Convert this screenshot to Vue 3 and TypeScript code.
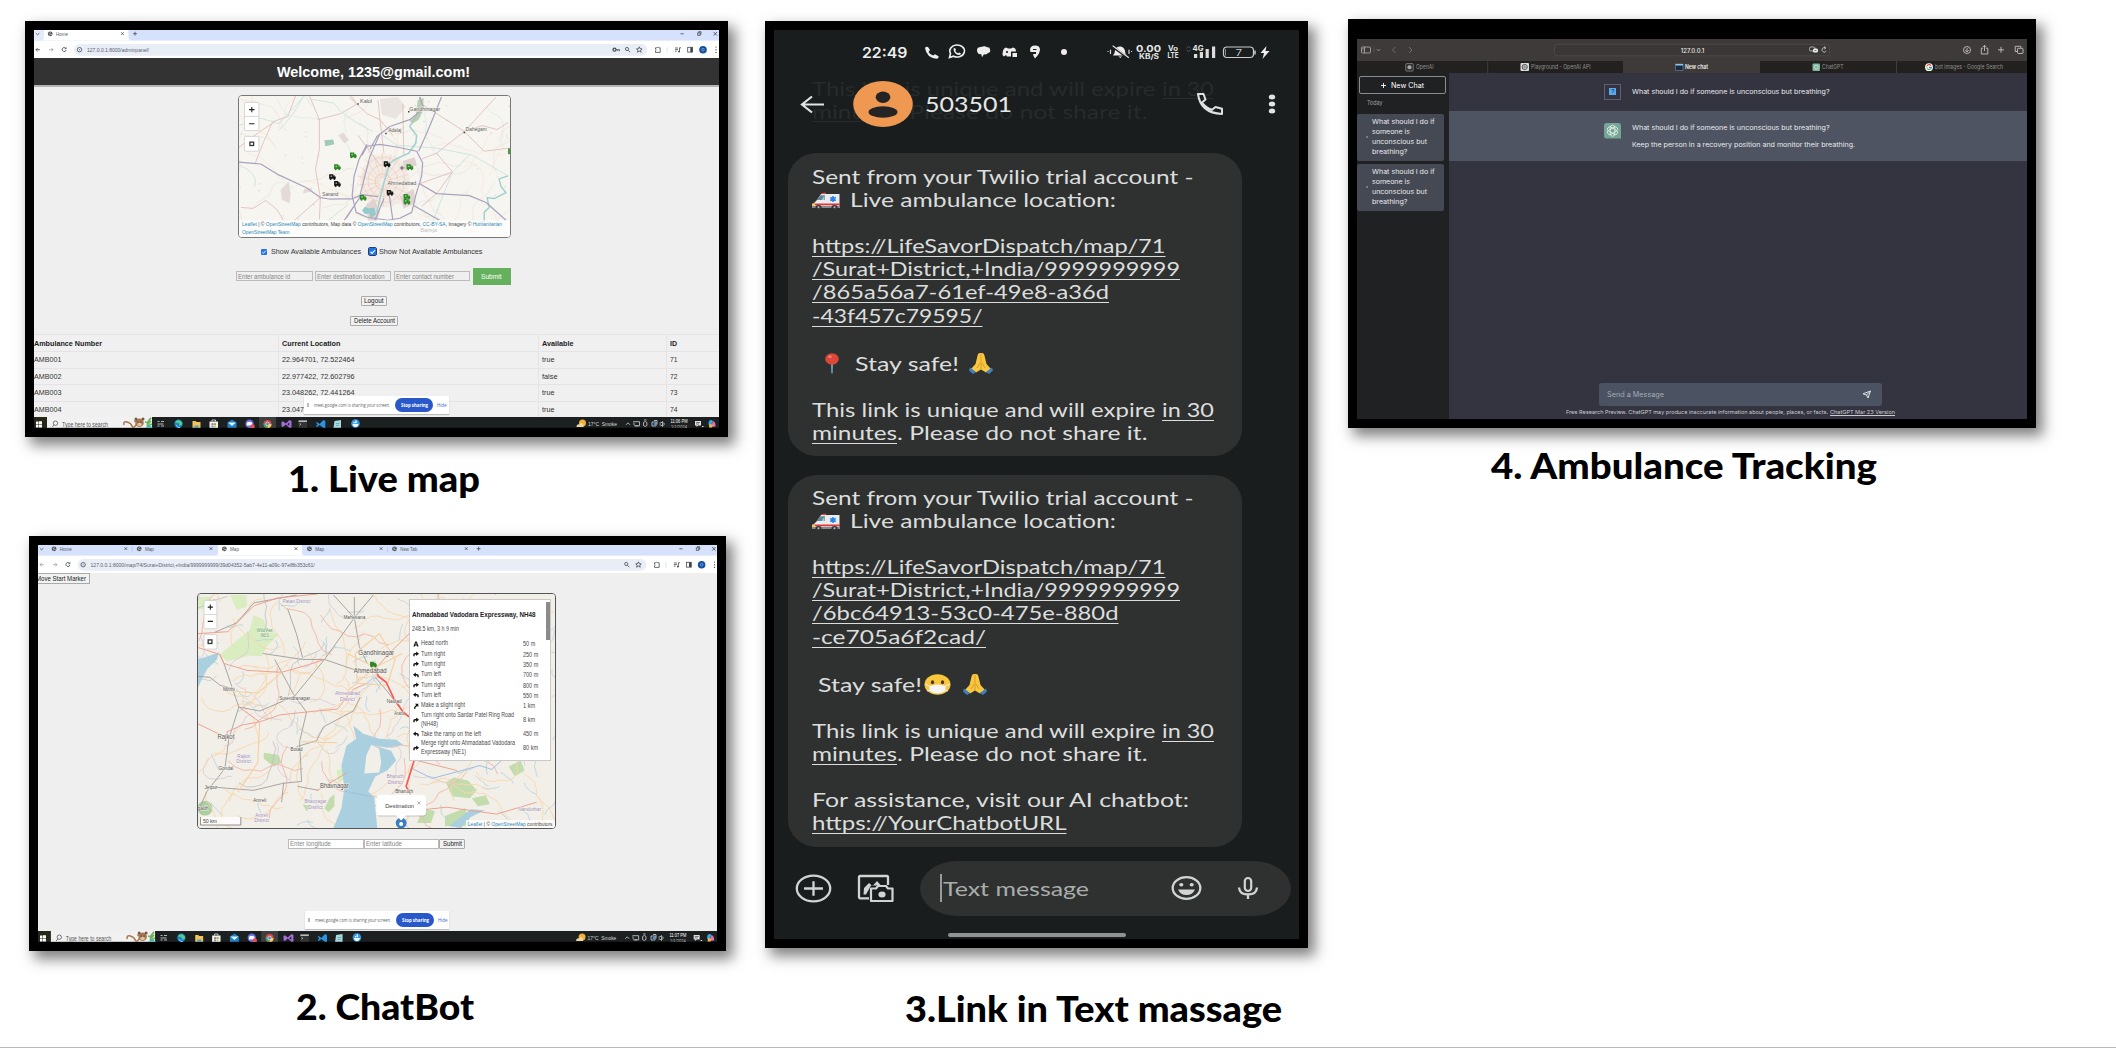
<script setup lang="ts">
interface Part { t?: string; w?: number; u?: boolean; ml?: number; emoji?: 'ambulance' | 'pin' | 'pray' | 'mask' }
interface Line { h: number; parts: Part[] }
interface Tab { x: number; name: string; w: number; active?: boolean }
interface Win { id: number; caption: string; capW: number; tabs: Tab[]; url: string; urlW: number; time: string }
interface Lbl { x: number; y: number; t: string; w: number; s?: number; c?: string }

/* Stretches a text element horizontally to the given width. */
const vFit = {
  mounted(el: HTMLElement, binding: { value: number }) {
    const w = el.getBoundingClientRect().width
    if (!w) return
    el.style.transform = `scaleX(${binding.value / w})`
    el.style.marginRight = `${binding.value - w}px`
  },
}

const windows: Win[] = [
  { id: 1, caption: '1. Live map', capW: 192, url: '127.0.0.1:8000/adminpanel/', urlW: 62, time: '11:06 PM', tabs: [{ x: 10, name: 'Home', w: 12, active: true }] },
  {
    id: 2, caption: '2. ChatBot', capW: 178, urlW: 226, time: '11:07 PM',
    url: '127.0.0.1:8000/map/74/Surat+District,+India/9999999999/39d04352-5ab7-4e11-a09c-97ef8b353c61/',
    tabs: [
      { x: 10, name: 'Home', w: 12 }, { x: 95.8, name: 'Map', w: 9 }, { x: 181.6, name: 'Map', w: 9, active: true },
      { x: 267.4, name: 'Map', w: 9 }, { x: 353.2, name: 'New Tab', w: 17 },
    ],
  },
]

const rows = [
  ['AMB001', '22.964701, 72.522464', 'true', '71'],
  ['AMB002', '22.977422, 72.602796', 'false', '72'],
  ['AMB003', '23.048262, 72.441264', 'true', '73'],
  ['AMB004', '23.047', 'true', '74'],
]

const steps = [
  { i: 'A', t: ['Head north'], w: [27], d: '50 m' },
  { i: 'R', t: ['Turn right'], w: [24], d: '250 m' },
  { i: 'R', t: ['Turn right'], w: [24], d: '350 m' },
  { i: 'L', t: ['Turn left'], w: [20], d: '700 m' },
  { i: 'R', t: ['Turn right'], w: [24], d: '800 m' },
  { i: 'L', t: ['Turn left'], w: [20], d: '550 m' },
  { i: 'S', t: ['Make a slight right'], w: [44], d: '1 km' },
  { i: 'R', t: ['Turn right onto Sardar Patel Ring Road', '(NH48)'], w: [93, 17], d: '8 km' },
  { i: 'L', t: ['Take the ramp on the left'], w: [60], d: '450 m' },
  { i: 'R', t: ['Merge right onto Ahmadabad Vadodara', 'Expressway (NE1)'], w: [94, 45], d: '80 km' },
]

const intro: Line[] = [
  { h: 23, parts: [{ t: 'Sent from your Twilio trial account -', w: 381.5 }] },
  { h: 23, parts: [{ emoji: 'ambulance' }, { t: 'Live ambulance location:', w: 266, ml: 9 }] },
  { h: 23, parts: [] },
  { h: 23, parts: [{ t: 'https://LifeSavorDispatch/map/71', w: 353.5, u: true }] },
  { h: 23, parts: [{ t: '/Surat+District,+India/9999999999', w: 368, u: true }] },
]
const expiry: Line[] = [
  { h: 23, parts: [] },
  { h: 23, parts: [{ t: 'This link is unique and will expire', w: 343.5 }, { t: 'in 30', w: 52, ml: 6.5, u: true }] },
  { h: 23, parts: [{ t: 'minutes', w: 85, u: true }, { t: '. Please do not share it.', w: 250.5 }] },
]
const bubbles: Line[][] = [
  [
    ...intro,
    { h: 23, parts: [{ t: '/865a56a7-61ef-49e8-a36d', w: 297, u: true }] },
    { h: 24, parts: [{ t: '-43f457c79595/', w: 170.5, u: true }] },
    { h: 23, parts: [] },
    { h: 25, parts: [{ emoji: 'pin', ml: 13 }, { t: 'Stay safe!', w: 104, ml: 16 }, { emoji: 'pray', ml: 10 }] },
    ...expiry,
  ],
  [
    ...intro,
    { h: 23, parts: [{ t: '/6bc64913-53c0-475e-880d', w: 306.5, u: true }] },
    { h: 24, parts: [{ t: '-ce705a6f2cad/', w: 174, u: true }] },
    { h: 23, parts: [] },
    { h: 25, parts: [{ t: 'Stay safe!', w: 104, ml: 6 }, { emoji: 'mask', ml: 2.5 }, { emoji: 'pray', ml: 12 }] },
    ...expiry,
    { h: 23, parts: [] },
    { h: 23, parts: [{ t: 'For assistance, visit our AI chatbot:', w: 377 }] },
    { h: 23, parts: [{ t: 'https://YourChatbotURL', w: 254.5, u: true }] },
  ],
]

/* Deterministic wandering lines that make up the minor roads and streams. */
function wander(seed: number, count: number, w: number, h: number, steps: number, len: number): string {
  let s = seed
  const r = () => { s = (s * 16807) % 2147483647; return s / 2147483647 }
  let d = ''
  for (let i = 0; i < count; i++) {
    let x = r() * w, y = r() * h, a = r() * 6.283
    d += `M${x.toFixed(1)} ${y.toFixed(1)}`
    for (let k = 0; k < steps; k++) {
      a += (r() - 0.5) * 1.3
      x += Math.cos(a) * len; y += Math.sin(a) * len
      d += `L${x.toFixed(1)} ${y.toFixed(1)}`
    }
  }
  return d
}
const m1 = {
  pink: wander(11, 16, 273, 143, 9, 7),
  orange: wander(77, 20, 273, 143, 8, 6),
  teal: wander(301, 14, 273, 143, 10, 5),
  dots: wander(902, 40, 273, 143, 1, 2),
}
let city = ''
for (let k = 0; k < 18; k++) {
  const a = (k / 18) * 6.283
  city += `M${145 + 4 * Math.cos(a)} ${87 + 4 * Math.sin(a)}L${145 + 26 * Math.cos(a + 0.15)} ${85 + 27 * Math.sin(a + 0.15)}`
}
const m2 = {
  orange: wander(21, 85, 359, 236, 9, 7),
  red: wander(222, 16, 359, 236, 9, 9),
  blue: wander(43, 95, 359, 236, 5, 3.5),
  purple: wander(99, 24, 359, 236, 12, 4),
  gray: wander(555, 7, 359, 236, 9, 8),
}

const labels1: Lbl[] = [
  { x: 128, y: 7, t: 'Kalol', w: 12 }, { x: 187, y: 15.5, t: 'Gandhinagar', w: 31 }, { x: 157, y: 37, t: 'Adalaj', w: 13 },
  { x: 239, y: 36, t: 'Dahegam', w: 21 }, { x: 164, y: 90, t: 'Ahmedabad', w: 29 }, { x: 92, y: 101, t: 'Sanand', w: 16 },
]
const P = '#a58fc0'
const labels2: Lbl[] = [
  { x: 99, y: 9, t: 'Patan District', w: 28, c: P }, { x: 157, y: 25, t: 'Mahesana', w: 22 },
  { x: 67, y: 38, t: 'Wild Ass', w: 16, c: '#4f9a4b' }, { x: 67, y: 43.5, t: 'WLS', w: 8, c: '#4f9a4b' },
  { x: 179, y: 61.5, t: 'Gandhinagar', w: 36, s: 6.4 }, { x: 173, y: 80, t: 'Ahmedabad', w: 33, s: 6.4 },
  { x: 31, y: 98, t: 'Morbi', w: 12 }, { x: 97, y: 107, t: 'Surendranagar', w: 31 },
  { x: 150, y: 102, t: 'Ahmedabad', w: 25, c: P }, { x: 150, y: 107.5, t: 'District', w: 15, c: P },
  { x: 28, y: 146.5, t: 'Rajkot', w: 17, s: 6.4 }, { x: 99, y: 158, t: 'Botad', w: 12 },
  { x: 46, y: 165, t: 'Rajkot', w: 13, c: P }, { x: 46, y: 170.5, t: 'District', w: 15, c: P },
  { x: 28, y: 178, t: 'Gondal', w: 15 }, { x: 137, y: 195.5, t: 'Bhavnagar', w: 29, s: 6.4 },
  { x: 13, y: 197, t: 'Jetpur', w: 13 }, { x: 62, y: 210, t: 'Amreli', w: 13 },
  { x: 118, y: 211, t: 'Bhavnagar', w: 22, c: P }, { x: 118, y: 216.5, t: 'District', w: 15, c: P },
  { x: 5, y: 218, t: 'gadh', w: 11 }, { x: 64, y: 224.5, t: 'Amreli', w: 13, c: P }, { x: 64, y: 230, t: 'District', w: 15, c: P },
  { x: 197, y: 110, t: 'Nadiad', w: 15 }, { x: 202, y: 122, t: 'Anand', w: 10 },
  { x: 198, y: 186, t: 'Bharuch', w: 17, c: P }, { x: 198, y: 191.500, t: 'District', w: 15, c: P },
  { x: 207, y: 201, t: 'Bharuch', w: 18 }, { x: 333, y: 219, t: 'Nandurbar', w: 23, c: P },
]
const trucks: [number, number, string][] = [
  [115, 60, '#2c8a22'], [99, 72, '#2c8a22'], [94, 82, '#151515'], [99, 89, '#151515'], [125, 103, '#2c8a22'],
  [149, 69, '#151515'], [172, 72, '#2c8a22'], [152, 98, '#151515'], [169, 102, '#2c8a22'], [169, 107, '#2c8a22'],
]
const history = ['What should I do if', 'someone is', 'unconscious but', 'breathing?']
const historyW = [62.5, 38, 55, 35.5]
</script>

<template>
  <main class="board">
    <div class="left">
      <div v-for="w in windows" :key="w.id" class="cell" :class="'cell' + w.id">
        <section class="frame desk">
          <!-- browser chrome -->
          <svg class="chrome" viewBox="0 0 685 28" preserveAspectRatio="none">
            <rect width="685" height="28" fill="#fff" />
            <rect width="685" height="10.6" fill="#d6e1fb" />
            <path v-if="w.id === 1" d="M0 0H10V7Q10 10.6 6 10.6H0Z" fill="#e4ebfb" />
            <path d="M1.8 3.2l1.8 1.6 1.8-1.6" class="ln" />
            <g v-for="(t, i) in w.tabs" :key="i" :transform="`translate(${t.x} 0)`">
              <path v-if="t.active" d="M0 0H84.5V6.6Q84.5 10.6 88 10.6H-3Q0 10.6 0 6.6Z" fill="#fff" />
              <path v-else-if="w.tabs[i + 1] && !w.tabs[i + 1].active" d="M85 1.500V6.500" stroke="#a9b6d6" stroke-width=".6" />
              <circle cx="6.200" cy="3.800" r="2.400" fill="#4a4f55" />
              <path d="M4.600 3l1.500.4.8-1.100M5.200 5.200l1.600-.9 1.100.3" stroke="#fff" stroke-width=".6" fill="none" />
              <text x="12" y="5.700" font-size="5.200" fill="#555b66" :textLength="t.w" lengthAdjust="spacingAndGlyphs">{{ t.name }}</text>
              <path d="M77.200 2.300l2.600 2.600m0-2.600l-2.600 2.600" class="ln" />
            </g>
            <path :transform="`translate(${w.tabs[w.tabs.length - 1].x + 91} 3.700)`" d="M-1.900 0H1.900M0-1.900V1.900" class="ln" />
            <path d="M646.500 3.800h3.200M663.700 2.800h2.400v2.600h-2.400zM664.600 2.500v-.8h2.400v2.600h-.7M679.600 2l3.400 3.600m0-3.600l-3.400 3.600" class="ln" />
            <rect x="40" y="14" width="573.500" height="11.800" rx="5.900" fill="#e9edf6" />
            <path d="M6 19.700H2m1.700-1.800L2 19.700l1.700 1.800" class="ln" :opacity="w.id === 1 ? 1 : .5" />
            <path d="M15 19.700h4m-1.700-1.800l1.700 1.800-1.700 1.800" class="ln" opacity=".5" />
            <path d="M31.700 18.300a2 2 0 1 0 .4 1.700M32.200 17.300v1.500h-1.500" class="ln" />
            <circle cx="45.500" cy="19.700" r="2.200" class="ln" /><circle cx="45.500" cy="19.700" r=".5" fill="#444" />
            <text x="53" y="21.800" font-size="6" fill="#596070" :textLength="w.urlW" lengthAdjust="spacingAndGlyphs">{{ w.url }}</text>
            <g v-if="w.id === 1" class="ln"><circle cx="580.500" cy="19.700" r="1.500" stroke-width="1.200" /><path d="M582 19.700h3.500v1.400M583.800 20v1" /></g>
            <circle cx="593" cy="19" r="1.600" class="ln" /><path d="M594.200 20.300l1.900 1.900" class="ln" />
            <path d="M605.300 16.800l.8 1.900 2 .2-1.500 1.300.5 2-1.800-1.100-1.800 1.100.5-2-1.500-1.300 2-.2z" class="ln" />
            <path d="M621.500 17.800h1.500a1 1 0 0 1 1.800 0h1.400v4.600h-4.700v-1.500a.9.9 0 0 0 0-1.700z" class="ln" />
            <path d="M633 17v5.500" stroke="#cbd7f0" stroke-width=".7" />
            <path d="M641 18h3m-3 1.600h3m-3 1.600h1.700M645.500 22v-4.200h1.700" class="ln" /><circle cx="645" cy="21.600" r=".9" fill="#444" />
            <rect x="653.700" y="17.300" width="4.800" height="4.800" class="ln" /><rect x="656.300" y="17.300" width="2.300" height="4.800" fill="#444" />
            <circle cx="669" cy="19.700" r="3.800" fill="#184f9c" /><circle cx="669" cy="19.700" r="1.300" fill="none" stroke="#8db4e4" stroke-width=".7" />
            <path d="M682 17v.1M682 19.700v.1M682 22.300v.1" stroke="#444" stroke-width="1.200" stroke-linecap="round" />
          </svg>

          <div v-if="w.id === 1" class="page">
            <h1 class="welcome"><span v-fit="193" class="f">Welcome, 1235@gmail.com!</span></h1>
            <div class="map map1">
              <svg viewBox="0 0 273 143" preserveAspectRatio="none">
                <rect width="273" height="143" fill="#f6f5f0" />
                <g fill="none" stroke-linejoin="round">
                  <path :d="m1.orange" stroke="#f6e3d3" stroke-width=".6" />
                  <path :d="m1.teal" stroke="#d6e7e3" stroke-width=".6" />
                  <path :d="m1.pink" stroke="#eeddda" stroke-width=".6" />
                  <path :d="m1.dots" stroke="#ded8d0" stroke-width=".9" />
                  <ellipse cx="147" cy="86" rx="25" ry="27" fill="#f0e1d8" opacity=".45" stroke="none" />
                  <path d="M128 110l8-6 6 14-4 10h-8zM165 66l12-4 2 8-12 6zM162 102l14-8 2 14-12 6z" fill="#dccacb" opacity=".8" stroke="none" />
                  <path d="M142 3l18-2 8 10-10 12-14-4z" fill="#e6e0db" opacity=".8" stroke="none" /><path d="M42 95l8-8 2 12-1 10-8-4zM100 40l5-3 6 8-5 3zM66 94l8-1-2 4-8 2z" fill="#ddd0cf" opacity=".7" stroke="none" />
                  <path :d="city" stroke="#f0cbb8" stroke-width=".6" />
                  <ellipse cx="145" cy="87" rx="8" ry="8" stroke="#ebc4b3" stroke-width=".7" />
                  <ellipse cx="145" cy="86" rx="15" ry="16" stroke="#eecbba" stroke-width=".7" />
                  <ellipse cx="146" cy="85" rx="21" ry="23" stroke="#eecbba" stroke-width=".6" />
                  <path d="M71 0L81 24V54L77 74 82 103 56 126M57 0L49 21 34 26 25 46 16 69M79 24L102 18 119 8M111 1L129 18 142 24 155 40M2 113L14 114 27 106 38 115 46 128M82 103L81 125M0 52Q20 36 35 27M119 8L113 0M140 4L142 24 146 58M165 8L166 60M120 40L142 70M227 36L184 8M227 36L259 1M227 36L247 56 271 53M227 36L199 58 184 64M227 36L245 30 260 34 271 27M199 58L215 77 200 98 184 112M182 89L215 77" stroke="#e2bfbc" stroke-width=".9" />
                  <path d="M0 70Q20 78 16 92M65 0Q55 20 40 35M142 38L159 50 200 53 235 60 271 81M71 3L95 7 104 17 120 28 135 36M0 30L20 22 40 28 65 1M90 126L110 110M232 60L215 77 190 140" stroke="#c6e1dc" stroke-width=".8" />
                  <path d="M271 81L262 84 264 92 269 98 257 104 250 103 252 113 247 118V127L240 130" stroke="#9bd0ce" stroke-width="1.400" />
                  <path d="M182 1L185 10 180 18 172 31 179 40 178 48 171 58 158 64 152 68 146 88 142 104 139 118" stroke="#a5d3d1" stroke-width="1.700" />
                  <path d="M124 116l3-4 4 2 5-1 2 7-5 4-2-5-4 1z" fill="#93cbcb" stroke="none" /><path d="M86 45l9-1 1 5-9 2z" fill="#a0c9b8" stroke="none" />
                  <path d="M180 4l6-2-1 14-4 8-6 4-3-3 6-5z" fill="#abc7a5" opacity=".8" stroke="none" />
                  <path d="M0 67L22 69 40 80 68 93 82 103 91 104.500 115 104 124 100 140 102M142 38L132 61 121 104 106 126M129 49L121 64 116 81 114 101 118 118 129 123 150 126 162 124 174 118 178 101 184 81 185 68 179 56 160 52 142 49 129 51 124 60M132 54L139 41 152 31 172 24 182 16 186 12 182 1M204 1L196 21 189 38 181 56M182 89L199 99 232 101 249 108 269 126M176 111L202 126M151 98L155 126M146 104L137 126M121 104L108 124" stroke="#aaa2bd" stroke-width="1.200" />
                </g>
                <text v-for="l in labels1" :key="l.t" :x="l.x" :y="l.y" :textLength="l.w" lengthAdjust="spacingAndGlyphs" text-anchor="middle" font-size="5.300" fill="#5e5e5e" class="halo">{{ l.t }}</text>
                <path d="M120 8v.1M171 16v.1M148 38v.1M227 37v.1" stroke="#444" stroke-width="1.500" stroke-linecap="square" />
                <g v-for="(t, i) in trucks" :key="i" :transform="`translate(${t[0]} ${t[1]})`" :fill="t[2]">
                  <path d="M-3.200-2.700H1V-1.400H2.300L3.500.2V2H-3.200Z" /><circle cx="-1.600" cy="2.200" r="1" /><circle cx="2" cy="2.200" r="1" />
                  <path d="M-1.900-.6h1.800M-1-1.500V.3M1.500-.6h.8" stroke="#dfe8dc" stroke-width=".5" />
                </g>
                <path d="M162 73h4.500M164.200 70.800v4.500" stroke="#555" stroke-width=".9" />
                <rect x="271" y="53" width="2" height="6" fill="#4c9a44" />
                <rect y="126" width="273" height="17" fill="#fff" opacity=".7" />
                <text x="191" y="138" font-size="5" fill="#c4c4c4" text-anchor="middle" textLength="17" lengthAdjust="spacingAndGlyphs">Bareja</text>
                <text x="3" y="132" font-size="5" fill="#444" textLength="262" lengthAdjust="spacingAndGlyphs"><tspan class="lk">Leaflet</tspan> | © <tspan class="lk">OpenStreetMap</tspan> contributors, Map data © <tspan class="lk">OpenStreetMap</tspan> contributors, <tspan class="lk">CC-BY-SA</tspan>, Imagery © <tspan class="lk">Humanitarian</tspan></text>
                <text x="3" y="139.500" font-size="5" class="lk" textLength="48" lengthAdjust="spacingAndGlyphs">OpenStreetMap Team</text>
                <g stroke="#c8c8c8" stroke-width=".7" fill="#fff"><rect x="5.500" y="6.500" width="14.500" height="28.500" rx="1" /><path d="M5.500 20.700H20" /><rect x="5.500" y="41" width="14.500" height="15" rx="1" /></g>
                <path d="M10.200 13.800h5.400M12.900 11.100v5.400M10.200 28.200h5.400" stroke="#222" stroke-width="1.100" /><rect x="11" y="46.800" width="3.700" height="3.400" fill="none" stroke="#333" stroke-width="1.300" />
              </svg>
            </div>
            <div class="checks">
              <i class="cb"><svg viewBox="0 0 6 6"><path d="M1.200 3l1.300 1.300 2.400-2.700" fill="none" stroke="#fff" stroke-width=".9" /></svg></i>
              <span v-fit="90" class="f">Show Available Ambulances</span>
              <i class="cb focus"><svg viewBox="0 0 6 6"><path d="M1.200 3l1.300 1.300 2.400-2.700" fill="none" stroke="#fff" stroke-width=".9" /></svg></i>
              <span v-fit="103.500" class="f">Show Not Available Ambulances</span>
            </div>
            <div class="form1">
              <div class="inp"><span v-fit="52" class="f">Enter ambulance id</span></div>
              <div class="inp"><span v-fit="67.500" class="f">Enter destination location</span></div>
              <div class="inp"><span v-fit="58" class="f">Enter contact number</span></div>
              <div class="green"><span v-fit="20.500" class="f">Submit</span></div>
            </div>
            <div class="btn logout"><span v-fit="19.500" class="f">Logout</span></div>
            <div class="btn del"><span v-fit="41" class="f">Delete Account</span></div>
            <div class="table">
              <div class="tr th"><span v-fit="68" class="f">Ambulance Number</span><span v-fit="58.500" class="f">Current Location</span><span v-fit="31.500" class="f">Available</span><span v-fit="7" class="f">ID</span></div>
              <div v-for="r in rows" :key="r[0]" class="tr"><div v-for="c in r" :key="c"><span v-fit="c.length > 10 ? 72.500 : c.length === 6 ? (c[0] === 'A' ? 27.500 : 22) : c.length === 5 ? 15.500 : c.length === 4 ? 12.500 : 7.500" class="f">{{ c }}</span></div></div>
            </div>
          </div>

          <div v-else class="page">
            <div class="btn move"><span v-fit="50" class="f">Move Start Marker</span></div>
            <div class="map map2">
              <svg viewBox="0 0 359 236" preserveAspectRatio="none">
                <rect width="359" height="236" fill="#f2efe8" />
                <path d="M22 61L52 36 56 21 66 26 70 36 81 41 69 53 64 63 52 62 29 68ZM32 1H49V13L39 16ZM0 3H14L10 14 0 16ZM139 178l6-2 1 12-5 2z" fill="#d9edc0" />
                <path d="M66 160l14 2 4 8-8 4-10-8zM132 206l5-4v12l-6 6-4-4zM249 190l8-5 14 3 9 10-7 8-18-2zM312 174l12-6 4 10-10 6zM226 216l12 3-4 12h-14zM248 224l20-8 6 18h-26zM275 206l14-3 4 9-12 2zM105 212l8 2-4 5z" fill="#c3dcae" />
                <circle cx="7" cy="216" r="7.500" fill="#a9cf9f" />
                <g fill="none" stroke-linejoin="round">
                  <path :d="m2.blue" stroke="#b3d2e0" stroke-width=".8" />
                  <path :d="m2.purple" stroke="#d3c4dc" stroke-width=".7" />
                  <path :d="m2.orange" stroke="#f8d7ac" stroke-width=".9" />
                  <path :d="m2.red" stroke="#f2b7a5" stroke-width=".9" />
                  <path :d="m2.gray" stroke="#c3bfbd" stroke-width=".8" />
                </g>
                <path d="M156 133L159 146 149 153 144 173 147 196 144 216 136 236H180L177 206 171 199 178 184 190 178 199 168 194 158 174 152 190 155 206 152 199 147 182 146 166 141ZM0 66L21 59 19 66 9 76 4 86 0 94ZM252 234l22-17 14 1-14 7-10 11z" fill="#aacfde" />
                <path d="M174 152L182 156 184 170 182 180 167 181 169 163Z" fill="#f2efe8" />
                <path d="M148 199L182 206" stroke="#87a8d8" stroke-width=".6" stroke-dasharray="2 1.500" />
                <g fill="none" stroke-linejoin="round">
                  <path d="M157 24V3M157 24L162 53 170 70M157 24L127 66 97 103M136 1L157 24 176 1M26 70L41 114 62 118 97 103M41 114L31 146 27 176 9 199 2 215M16 39L39 29 56 9 99 1M77 66L84 79 97 103 109 119 102 149 104 189M104 189L85 191 56 198 30 196 9 194M99 154L119 148 126 134 156 118 163 104M121 198L100 194M86 190L84 210M0 83L12 84 22 92 33 95M22 61L26 70M178 84L190 98 205 118M65 60L105 66 127 66 156 76 176 78M90 15Q100 40 105 64" stroke="#a7a3a0" stroke-width="1" />
                  <path d="M0 54L22 61 26 70 49 77 84 79 112 71 127 66M0 40L30 38 56 12 80 4 120 0M31 146L29 139 45 132 62 129 82 122 109 119 140 116 156 96 170 90M31 146L0 131M62 129L41 114M120 198L150 180M176 78L190 62 212 40M210 196L222 218 250 215 300 222 340 210M220 168L260 178" stroke="#eda190" stroke-width="1" />
                  <path d="M182 40L158 60 160 90 190 92 198 66ZM178 74L205 60M178 74L150 60M178 74L150 98M84 79L60 100 31 98M104 149L140 150M62 129L60 170 40 200" stroke="#f6cf9c" stroke-width="1.100" />
                  <path d="M215 176l20 10 30-8 18-5 12 4 16-15" stroke="#9dbbe0" stroke-width="1" />
                  <path d="M179 76L181 83 189 89 197 106 206 119 212 124M217 168L209 194 213 201" stroke="#fa5a55" stroke-width="1.700" />
                </g>
                <text v-for="(l, i) in labels2" :key="i" :x="l.x" :y="l.y" :textLength="l.w" lengthAdjust="spacingAndGlyphs" text-anchor="middle" :font-size="l.s || 5.300" :fill="l.c || '#555'" class="halo">{{ l.t }}</text>
                <g transform="translate(176 71)" fill="#2c8a22"><path d="M-3.200-2.700H1V-1.400H2.300L3.500.2V2H-3.200Z" /><circle cx="-1.600" cy="2.200" r="1" /><circle cx="2" cy="2.200" r="1" /></g>
                <rect x="269" y="228" width="90" height="8" fill="#fff" opacity=".75" />
                <text x="271" y="234" font-size="5.600" fill="#444" textLength="85" lengthAdjust="spacingAndGlyphs"><tspan class="lk">Leaflet</tspan> | © <tspan class="lk">OpenStreetMap</tspan> contributors</text>
                <path d="M198.500 231a5.500 5.500 0 0 1 11 0q0 3-3 5h-5q-3-2-3-5Z" fill="#397fc0" /><circle cx="204" cy="232" r="2" fill="#fff" />
                <rect x="179.500" y="203.500" width="49.500" height="21" rx="4" fill="#9a9a9a" opacity=".5" />
                <path d="M183 202.500H225Q229 202.500 229 206.500V219.500Q229 223.500 225 223.500H209L204 228.500 199 223.500H183Q179 223.500 179 219.500V206.500Q179 202.500 183 202.500Z" fill="#fff" />
                <text x="188" y="215.400" font-size="6" fill="#444" textLength="29" lengthAdjust="spacingAndGlyphs">Destination</text>
                <path d="M220.300 209.200l3.200 3.200m0-3.200l-3.200 3.200" stroke="#777" stroke-width=".6" />
                <rect x="2.500" y="225" width="40.500" height="8" fill="#fff" opacity=".75" /><path d="M2.500 225V233H43V225" fill="none" stroke="#777" stroke-width=".8" />
                <text x="5" y="231" font-size="5.300" fill="#444" textLength="14">50 km</text>
                <g stroke="#c8c8c8" stroke-width=".7" fill="#fff"><rect x="6" y="6.500" width="13" height="28.500" rx="1" /><path d="M6 20.700H19" /><rect x="6" y="41" width="13" height="14.500" rx="1" /></g>
                <path d="M9.800 13.200h5.200M12.400 10.600v5.200M9.800 27.600h5.200" stroke="#222" stroke-width="1.100" /><rect x="10.200" y="46.300" width="3.800" height="3.600" fill="none" stroke="#333" stroke-width="1.300" />
              </svg>
              <div class="dir">
                <h3><span v-fit="123.500" class="f">Ahmadabad Vadodara Expressway, NH48</span></h3>
                <p><span v-fit="47" class="f">248.5 km, 3 h 9 min</span></p>
                <div v-for="(s, i) in steps" :key="i" class="step" :class="{ two: s.t.length > 1 }">
                  <svg viewBox="0 0 6 6">
                    <path v-if="s.i === 'A'" d="M.4 5.600L2.300.4h1.400L5.600 5.600H4.200L3.900 4.500H2.100L1.800 5.600ZM2.400 3.500h1.200L3 1.500Z" />
                    <path v-else-if="s.i === 'S'" d="M2 .8h3.300v3.300L4.200 3 2.400 4.600V6H1.200V4L3.200 2Z" />
                    <path v-else :transform="s.i === 'L' ? 'translate(6 0) scale(-1 1)' : ''" d="M.3 5.300V3.500Q.3 2 2 2H3.200V.5L6 2.800 3.200 5V3.600H1.700V5.300Z" />
                  </svg>
                  <div class="what"><div v-for="(t, k) in s.t" :key="k"><span v-fit="s.w[k]" class="f">{{ t }}</span></div></div>
                  <span v-fit="s.d.length * 3.05" class="f dist">{{ s.d }}</span>
                </div>
                <i class="thumb"></i>
              </div>
            </div>
            <div class="form2">
              <div class="inp"><span v-fit="41" class="f">Enter longitude</span></div>
              <div class="inp"><span v-fit="36" class="f">Enter latitude</span></div>
              <div class="btn"><span v-fit="19" class="f">Submit</span></div>
            </div>
          </div>

          <div class="share">
            <i></i><span v-fit="76" class="f">meet.google.com is sharing your screen.</span>
            <b><span v-fit="27" class="f">Stop sharing</span></b>
            <u><span v-fit="9.500" class="f">Hide</span></u>
          </div>

          <!-- taskbar -->
          <svg class="task" viewBox="0 0 685 10.800" preserveAspectRatio="none">
            <rect width="685" height="10.800" fill="#1c2021" /><rect width="13" height="10.800" fill="#262719" />
            <path d="M2 4.500h2.500v2.800H2zM5 4.200h3v3.100H5zM2 7.800h2.500v2.600H2zM5 7.800h3v2.800H5z" fill="#fff" />
            <rect x="13" width="105" height="10.800" fill="#f1f1f1" />
            <circle cx="21.500" cy="6.200" r="2.200" fill="none" stroke="#444" stroke-width=".7" /><path d="M20 8l-1.800 2" stroke="#444" stroke-width=".7" />
            <text x="28" y="9.800" font-size="6.300" fill="#555" textLength="46" lengthAdjust="spacingAndGlyphs">Type here to search</text>
            <path d="M90 8q-1-4 3-3t5 4 4-1-2-4" fill="none" stroke="#a87650" stroke-width="1.500" /><circle cx="105.500" cy="5.700" r="4.300" fill="#a87854" /><circle cx="102" cy="2" r="1.500" fill="#795743" /><circle cx="109" cy="2" r="1.500" fill="#795743" /><ellipse cx="105.500" cy="7.500" rx="2.300" ry="1.800" fill="#e2c19e" /><path d="M104 5v.1M107 5v.1" stroke="#222" stroke-width="1" stroke-linecap="round" />
            <path d="M114 10.800q-2-5 3-10M111 5l4 1 2-2M113 9l5-2" stroke="#6eb35b" stroke-width="1.700" fill="none" /><path d="M111 10.800l4-3 4 3z" fill="#46b8b0" />
            <path d="M123.500 4.500h2M127 4.500h3M123.500 7h6M123.500 9h2m1.500 0h3" stroke="#bbb" stroke-width="1" />
            <circle cx="144.500" cy="6.800" r="4.200" fill="#1b83cf" /><path d="M141 5.500q3-4.500 7 0 1 3.500-3 3 1-2-1-2.500z" fill="#55cf83" /><path d="M142 8q1.500 3 4 2.800" stroke="#83d6f1" fill="none" />
            <path d="M158.500 4h3l1 1h4v5.800h-8z" fill="#f4c453" /><path d="M160.500 8.500h4v2.300h-4z" fill="#4b9ad8" />
            <path d="M175.500 4.500h8.500v6.300h-8.500z" fill="#eef2f4" /><path d="M178 4.500V3h3.500v1.500" fill="none" stroke="#eee" stroke-width=".8" /><path d="M177.500 6.200h2v1.800h-2z" fill="#e55f46" /><path d="M180 6.200h2v1.800h-2z" fill="#72b64a" /><path d="M177.500 8.500h2v1.800h-2z" fill="#3ba0e2" /><path d="M180 8.500h2v1.800h-2z" fill="#f3bd3b" />
            <path d="M193.500 5.500l4.500-3 4.500 3v5.300h-9z" fill="#1c83cc" /><path d="M194 5.500h8l-4 3.500z" fill="#e5f4fc" />
            <circle cx="215.500" cy="6.700" r="4.200" fill="#696ee0" /><path d="M213 5.500q2.500-1.500 5 0l.5 3h-6z" fill="#fff" /><circle cx="218.500" cy="9.500" r="2.300" fill="#e14f5e" />
            <rect x="225" width="17" height="10.800" fill="#3b3f40" />
            <circle cx="233.500" cy="7" r="4" fill="#e2493b" /><path d="M233.500 7L237.500 7A4 4 0 0 1 233.500 11z" fill="#f7cb45" /><path d="M229.700 6L233.500 7v4a4 4 0 0 1-3.800-5z" fill="#41a85c" /><circle cx="233.500" cy="7" r="1.800" fill="#4387ea" stroke="#fff" stroke-width=".6" />
            <path d="M247.500 5l1.300-.7 3 2.300L255.500 3l2 1v6.500l-2 .3-3.700-3.200-3 2.400-1.300-.8z" fill="#a66fd9" /><path d="M255.300 5.500v3.300l-2-1.600z" fill="#1c2021" />
            <path d="M264.500 3.500h8.500v7.300h-8.500z" fill="#343434" /><path d="M264.500 3.500h8.500v1.300h-8.500z" fill="#ddd" /><path d="M265.500 6.300l1.500 1-1.500 1" stroke="#ddd" stroke-width=".6" fill="none" />
            <path d="M282 5.700l1-.8 2.600 2L289.300 3l2 1v6.800h-2L285.600 8l-2.600 2-1-.8 1.500-1.700z" fill="#2896e3" />
            <path d="M300.500 4l6.500-1v7.800h-7.500z" fill="#a8d9dd" /><path d="M302 6.500h3.500M302 8.500h3" stroke="#4a8d98" stroke-width=".6" />
            <circle cx="321.500" cy="6.500" r="4.300" fill="#369be9" /><path d="M318.500 7h6q-.5 3-3 3t-3-3zM319.500 5h1.300v1.300h-1.300zm1.800-1.500h1.300v2.800h-1.300z" fill="#fff" />
            <circle cx="548.500" cy="6" r="3.500" fill="#f4af36" /><path d="M542.500 10q0-3 3-2.600 1-2 3-1 1.500 1.200 1 3.600z" fill="#ead7a8" />
            <text x="554" y="9.300" font-size="5.600" fill="#d9d9d9" textLength="29" lengthAdjust="spacingAndGlyphs">17°C&#160; Smoke</text>
            <g fill="none" stroke="#d5d5d5" stroke-width=".8"><path d="M592 7.800l2-2 2 2M599.500 5.500v-.8h6v4.200h-4M599 7h2M600 8.800h4M609.500 5.500q1.700-2 3.400 0v3q-1.700 2-3.400 0zM610 3h2.600M618 5h4v4h-4zM620 3.500h3v4M625.500 6h1.500l1.500-1.500v5L627 8h-1.500M629.600 5.500q1.300 1.500 0 3" /></g><path d="M619 7l3-2v4z" fill="#4794e7" />
            <text x="636.500" y="5.700" font-size="5.200" fill="#fff" textLength="17" lengthAdjust="spacingAndGlyphs">{{ w.time }}</text>
            <text x="637" y="12" font-size="4.900" fill="#bbb" textLength="16" lengthAdjust="spacingAndGlyphs">1/1/2024</text>
            <path d="M661 4h6v4.500h-3L662.500 10V8.500H661zM668 9h1.500v1H668z" fill="#e3e3e3" /><path d="M662 5.500h4m-4 1.500h3" stroke="#333" stroke-width=".6" />
            <path d="M675 4q2-2 4 0l-2.500 5q-3 0-1.500-5z" fill="#35a9e5" /><path d="M679 4q3 1 2.500 5.500L677 10z" fill="#eb6daf" /><path d="M675.500 7l3 .5-.5 3h-3z" fill="#f2ba3f" />
          </svg>
        </section>
        <h2><span v-fit="w.capW" class="f">{{ w.caption }}</span></h2>
      </div>
    </div>

    <div class="middle">
      <section class="frame phone">
        <div class="ghost">
          <div><span v-fit="343.500" class="f">This link is unique and will expire</span><u v-fit="52" class="f g2">in 30</u></div>
          <div><u v-fit="85" class="f">minutes</u><span v-fit="250.500" class="f">. Please do not share it.</span></div>
        </div>
        <svg class="status" viewBox="0 0 525 30">
          <text x="88" y="27.500" font-size="15" font-weight="600" font-family="Inter, sans-serif" fill="#eee" textLength="45.500" lengthAdjust="spacingAndGlyphs">22:49</text>
          <path d="M151 18q1-2 3-1l2 3-1.500 2q1.500 2.500 4.500 3.500l2-1.300 3.500 2q.5 2-2 2.500-10-1-11.500-10.700z" fill="#eee" />
          <path d="M175.500 27.500l1-4a7.300 6 0 1 1 3 2.700z" fill="none" stroke="#eee" stroke-width="1.600" /><path d="M179.500 18.500l1.500-.5 1 2-.8 1q1.200 1.800 3 2.200l1-.8 1.800 1q-.5 1.800-2.500 1.600-5-1.200-5-6.500z" fill="#eee" />
          <path d="M203 20q0-3 4-3 4-1.500 6 .3 3-.5 3 2.200 1 3-2 3.500-1 1.800-4 1.300l-2 3-.8-3.200q-4.200.5-4.200-4.100z" fill="#eee" />
          <path d="M228.500 25q0-7 3.500-7.500l2 1h3l2-1q3 .5 3 4h-5v5h-4l-1-1.500-2 1.500zM238.500 23h4.500v4h-4.500z" fill="#eee" /><circle cx="233" cy="22" r="1.100" fill="#191d1d" />
          <path d="M256 20q0-4.500 5-4.500t5 4.300q-.5 4.500-5 8.700-2-2.700-2-4.500h3v-2h-5.500z" fill="#eee" /><path d="M259 19.500h3.500" stroke="#191d1d" stroke-width="1" />
          <circle cx="290" cy="22" r="3" fill="#eee" />
          <path d="M339 25.500q2-2 2-5 1-4 5-4t5 4.500q0 3 2 4.500zM344.500 26.500h3.500l-1.700 1.500z" fill="#eee" /><path d="M338.500 16.500l15.500 11.500" stroke="#191d1d" stroke-width="2.200" /><path d="M339 16l15.500 11.500M334 21.500h.2M336.500 20v3.500M355 20v3.500M357.500 21.500h.2" stroke="#ddd" stroke-width="1.200" stroke-linecap="round" />
          <g fill="#e6e6e6" font-family="Inter, sans-serif" font-weight="700"><text x="362" y="22" font-size="9.500" textLength="25" lengthAdjust="spacingAndGlyphs">0.00</text><text x="365" y="28.500" font-size="7" textLength="20" lengthAdjust="spacingAndGlyphs">KB/S</text><text x="394" y="20.500" font-size="7" textLength="10" lengthAdjust="spacingAndGlyphs">Vo</text><text x="393.500" y="27.500" font-size="7.500" textLength="11" lengthAdjust="spacingAndGlyphs">LTE</text><text x="418.500" y="20.500" font-size="7.500" textLength="11" lengthAdjust="spacingAndGlyphs">4G</text></g>
          <path d="M412.500 18l2-1.500 2 1.500M412.500 20l2 1.500 2-1.500" fill="none" stroke="#555" stroke-width="1" />
          <path d="M420 24h3.200v4H420zM425.800 22h3.200v6h-3.200zM431.600 19h3.200v9h-3.200zM438 16.500h3.200V28H438z" fill="#ddd" />
          <rect x="449.500" y="17" width="30" height="10.500" rx="3.500" fill="none" stroke="#ccc" stroke-width="1.200" /><path d="M481 20.500v4" stroke="#ccc" stroke-width="1.500" /><path d="M451.500 19v6.500" stroke="#888" stroke-width="1" /><text x="461.500" y="25.500" font-size="9" fill="#ccc" textLength="6.500" lengthAdjust="spacingAndGlyphs">7</text>
          <path d="M492.500 16l-6 7h3.500l-1.500 6 7-8h-4z" fill="#eee" />
        </svg>
        <div class="phead">
          <svg width="25" height="19" viewBox="0 0 25 19"><path d="M24 9.500H2M12 1.500L2 9.500l10 8" fill="none" stroke="#e3e3e3" stroke-width="2.200" /></svg>
          <svg class="av" width="60" height="46" viewBox="0 0 60 46"><ellipse cx="30" cy="23" rx="29.800" ry="23" fill="#ee9852" /><ellipse cx="30" cy="16.300" rx="7.300" ry="5.700" fill="#252323" /><ellipse cx="30" cy="31" rx="14.500" ry="5.800" fill="#252323" /></svg>
          <span v-fit="87" class="f num">503501</span>
          <svg class="call" width="28" height="22" viewBox="0 0 28 22"><path d="M2 1h5.500l2 5.500-3.500 3q4 5.500 10 7.300l3.500-2.800 6.500 1.700V21Q4.500 20 2 1Z" fill="none" stroke="#dfe2e2" stroke-width="2" stroke-linejoin="round" /></svg>
          <svg width="8" height="20" viewBox="0 0 8 20"><g fill="#e3e3e3"><ellipse cx="4" cy="3" rx="3.200" ry="2.500" /><ellipse cx="4" cy="10" rx="3.200" ry="2.500" /><ellipse cx="4" cy="17" rx="3.200" ry="2.500" /></g></svg>
        </div>
        <div v-for="(b, i) in bubbles" :key="i" class="bubble">
          <div v-for="(l, k) in b" :key="k" class="line" :style="{ height: l.h + 'px' }">
            <template v-for="(p, n) in l.parts" :key="n">
              <i v-if="p.ml" class="gap" :style="{ width: p.ml + 'px' }"></i>
              <span v-if="p.t" v-fit="p.w || 0" class="f" :class="{ un: p.u }">{{ p.t }}</span>
              <svg v-else-if="p.emoji === 'ambulance'" width="29" height="18" viewBox="0 0 29 18">
                <path d="M9 2Q10 .2 14 .8V2.500H9Z" fill="#e8433f" /><path d="M1 12L5 8 9 2H27.500V15H1Z" fill="#e9ebee" /><path d="M4.500 8L8.500 3.200H13V8Z" fill="#5f8795" /><path d="M9.500 8l3-4.500V8z" fill="#a8cbd4" /><path d="M1 11.500H28V13.300H1Z" fill="#df3a37" /><path d="M0 14h28v2H0z" fill="#828a90" /><path d="M0 11.500h3v2.500H0z" fill="#f3c957" /><path d="M21 4v6M18.200 5.500l5.600 3M23.800 5.500l-5.600 3" stroke="#2785e8" stroke-width="1.500" /><ellipse cx="6.500" cy="15.300" rx="3" ry="2.400" fill="#33383c" /><ellipse cx="22.500" cy="15.300" rx="3" ry="2.400" fill="#33383c" /><circle cx="6.500" cy="15.300" r="1" fill="#bbb" /><circle cx="22.500" cy="15.300" r="1" fill="#bbb" />
              </svg>
              <svg v-else-if="p.emoji === 'pin'" width="14" height="21" viewBox="0 0 14 21"><path d="M5.900 10h2.200l-.4 10.500h-1.400z" fill="#6fa0b4" /><ellipse cx="7" cy="6" rx="6.800" ry="5.700" fill="#dd4638" /><ellipse cx="5" cy="3.700" rx="2" ry="1.200" fill="#f08273" /></svg>
              <svg v-else-if="p.emoji === 'pray'" width="24" height="22" viewBox="0 0 24 22"><path d="M11.700 1q-2.500-.5-3 2L6.500 12 2 17l5 3.500 5-3 5 3L22 17l-4.500-5-2.200-9q-.5-2.500-3-2Z" fill="#f8c63f" /><path d="M12 2v15M8 16l3-5M16 16l-3-5" stroke="#d69a28" stroke-width=".9" fill="none" /><path d="M1 15.500L7 20 4 22 0 18.500ZM23 15.500L17 20l3 2 4-3.500Z" fill="#3c80bd" /></svg>
              <svg v-else width="27" height="21" viewBox="0 0 27 21"><ellipse cx="13.500" cy="10.500" rx="13" ry="10.200" fill="#f9c73c" /><ellipse cx="8.500" cy="8.200" rx="1.600" ry="2" fill="#4b3522" /><ellipse cx="18.500" cy="8.200" rx="1.600" ry="2" fill="#4b3522" /><path d="M1 10l5 2.500M26 10l-5 2.500M3 17l4-1M24 17l-4-1" stroke="#e7e7e7" stroke-width="1.200" /><path d="M5.500 12Q13.500 9 21.500 12V17Q13.500 22 5.500 17Z" fill="#f5f5f5" /></svg>
            </template>
          </div>
        </div>
        <div class="compose">
          <svg width="37" height="29" viewBox="0 0 37 29"><ellipse cx="18.500" cy="14.500" rx="16.700" ry="12.800" fill="none" stroke="#d0d5d4" stroke-width="2.300" /><path d="M9 14.500H28M18.500 7.300V21.700" stroke="#d0d5d4" stroke-width="2.300" /></svg>
          <svg class="gal" width="37" height="29" viewBox="0 0 37 29"><path d="M31 11V3Q31 2 30 2H3Q2 2 2 3V23Q2 24.300 3 24.300H12" fill="none" stroke="#d0d5d4" stroke-width="2.300" /><path d="M6.500 20.500L7 14l5-5 3.500 3L20 7l4 4.500H14L9 20.500Z" fill="#d0d5d4" /><path d="M14 14.500h5l2-2.500h8l2 2.500h4.500V27H14Z" fill="#191d1d" stroke="#d0d5d4" stroke-width="2.200" stroke-linejoin="round" /><ellipse cx="25" cy="20.500" rx="3.600" ry="2.900" fill="#d0d5d4" /></svg>
          <div class="field">
            <i class="cur"></i><span v-fit="146" class="f">Text message</span>
            <svg class="smile" width="31" height="24" viewBox="0 0 31 24"><ellipse cx="15.500" cy="12" rx="13.800" ry="10.800" fill="none" stroke="#d0d5d4" stroke-width="2.300" /><ellipse cx="10.300" cy="8.800" rx="2.100" ry="1.700" fill="#d0d5d4" /><ellipse cx="20.700" cy="8.800" rx="2.100" ry="1.700" fill="#d0d5d4" /><path d="M7 13.500H24Q21.500 19 15.500 19T7 13.500Z" fill="#d0d5d4" /></svg>
            <svg width="22" height="24" viewBox="0 0 22 24"><rect x="7.800" y="2" width="6.400" height="13" rx="3.200" fill="none" stroke="#d0d5d4" stroke-width="2.200" /><path d="M2 11.500Q2.500 18.500 11 18.500T20 11.500M11 18.500V23" fill="none" stroke="#d0d5d4" stroke-width="2.300" /></svg>
          </div>
        </div>
        <div class="home"></div>
      </section>
      <h2><span v-fit="377" class="f">3.Link in Text massage</span></h2>
    </div>

    <div class="right">
      <section class="frame chat">
        <svg class="safari" viewBox="0 0 670.500 34" preserveAspectRatio="none">
          <rect width="670.500" height="34" fill="#3e3a39" />
          <g fill="none" stroke="#b4b1b0" stroke-width=".8"><rect x="4.500" y="8" width="9" height="6" rx="1" /><path d="M7.500 8v6M5.500 9.500h1M5.500 11h1M20 10.300l1.500 1.500 1.500-1.500" /></g>
          <path d="M17 8v6" stroke="#575352" stroke-width=".8" />
          <path d="M38.500 8l-3 3 3 3M52 8l3 3-3 3" fill="none" stroke="#777372" stroke-width=".9" />
          <rect x="197.500" y="5.300" width="275" height="11.500" rx="2.500" fill="#3b3736" stroke="#514d4c" stroke-width=".8" />
          <text x="323.700" y="13.500" font-size="5.700" font-weight="500" fill="#ece9e8" textLength="23.500" lengthAdjust="spacingAndGlyphs">127.0.0.1</text>
          <rect x="452.500" y="8" width="5.500" height="4" rx="1.500" fill="none" stroke="#ccc" stroke-width=".8" /><rect x="456" y="9.500" width="5" height="4" rx="1.500" fill="#eee" /><path d="M457.500 11.500h2" stroke="#444" stroke-width=".7" />
          <path d="M469 9.300a2.300 2.300 0 1 0 .4 2.500M467 7.300l1.800 1.600-1.800 1.400" fill="none" stroke="#ccc" stroke-width=".8" />
          <g fill="none" stroke="#c5c2c1" stroke-width=".9"><circle cx="610" cy="11" r="3.500" /><path d="M610 9v4M608.300 11.300L610 13l1.700-1.700M626 9.200h-1.700v5.800h6.500V9.200H629M627.500 12V6.500M625.800 8l1.700-1.700L629.200 8M641 10.800h6M644 7.800v6" /><rect x="660.500" y="9.300" width="5.500" height="5.200" rx=".8" /><path d="M660 12.500h-1.800V7.300h5.600v1.500" /></g>
          <rect y="22" width="266" height="12" fill="#222120" /><rect x="403" y="22" width="267.500" height="12" fill="#222120" />
          <path d="M130.700 22v12M539.500 22v12" stroke="#403d3c" stroke-width="1" />
          <rect x="48.700" y="24.500" width="7.600" height="7.600" rx="1" fill="#333" stroke="#999" stroke-width=".6" /><circle cx="52.500" cy="28.300" r="2" fill="#aaa" />
          <rect x="163.500" y="24" width="8.500" height="8" rx="1" fill="#ddd" /><circle cx="167.700" cy="28" r="2.600" fill="none" stroke="#555" /><path d="M165.500 26.700l4.400 2.600M170 26.700l-4.500 2.600M167.700 25.400v5.200" stroke="#555" stroke-width=".4" />
          <rect x="318.500" y="25" width="7.500" height="6.500" fill="#1c2b42" stroke="#7d96b8" stroke-width=".5" /><path d="M318.500 25h7.500v1.500h-7.500z" fill="#8cc3ef" />
          <rect x="455.500" y="24.500" width="7.500" height="7.500" rx="1" fill="#7db5a0" /><circle cx="459.200" cy="28.200" r="2" fill="none" stroke="#dff0ea" stroke-width=".7" />
          <circle cx="572" cy="28.200" r="3.900" fill="#fff" /><path d="M574 26.600a2.400 2.400 0 0 0-4 .3" stroke="#e54838" stroke-width="1.200" fill="none" /><path d="M569.800 27v2.600" stroke="#f3b93b" stroke-width="1.200" /><path d="M570 29.600q2 1.700 4 0" stroke="#3da55c" stroke-width="1.200" fill="none" /><path d="M572 28.400h2.400v1.200" stroke="#4285e8" stroke-width="1.200" fill="none" />
          <g font-size="5.700" fill="#94918f">
            <text x="59" y="30.300" textLength="17.500" lengthAdjust="spacingAndGlyphs">OpenAI</text><text x="174" y="30.300" textLength="59.500" lengthAdjust="spacingAndGlyphs">Playground - OpenAI API</text>
            <text x="328" y="30.300" fill="#f0eeed" font-weight="600" textLength="23" lengthAdjust="spacingAndGlyphs">New chat</text>
            <text x="465" y="30.300" textLength="21.500" lengthAdjust="spacingAndGlyphs">ChatGPT</text><text x="578" y="30.300" textLength="68" lengthAdjust="spacingAndGlyphs">bot images - Google Search</text>
          </g>
        </svg>
        <div class="cbody">
          <aside>
            <div class="newchat"><svg width="5" height="5" viewBox="0 0 5 5"><path d="M0 2.500h5M2.500 0v5" stroke="#fff" stroke-width=".9" /></svg><span v-fit="33" class="f">New Chat</span></div>
            <div class="today"><span v-fit="15.500" class="f">Today</span></div>
            <div v-for="n in 2" :key="n" class="hist"><i></i><div><p v-for="(h, k) in history" :key="k"><span v-fit="historyW[k]" class="f">{{ h }}</span></p></div></div>
          </aside>
          <div class="conv">
            <div class="msg"><div class="usr"><i>?</i></div><p><span v-fit="197.500" class="f">What should I do if someone is unconscious but breathing?</span></p></div>
            <div class="msg bot">
              <svg width="17" height="15.500" viewBox="0 0 17 15.500"><path d="M2.500 0H14.500Q17 0 17 2.500V15.500H2.500Q0 15.500 0 13V2.500Q0 0 2.500 0Z" fill="#74a595" /><g fill="none" stroke="#e7f3ee" stroke-width=".8" transform="translate(8.500 7.700)"><rect v-for="k in 3" :key="k" x="-2.300" y="-5.500" width="4.600" height="11" rx="2.300" :transform="`rotate(${k * 60})`" /></g></svg>
              <div><p><span v-fit="197.500" class="f">What should I do if someone is unconscious but breathing?</span></p><p><span v-fit="223" class="f">Keep the person in a recovery position and monitor their breathing.</span></p></div>
            </div>
            <div class="grow"></div>
            <div class="send"><span v-fit="57" class="f">Send a Message</span><svg width="10" height="9" viewBox="0 0 10 9"><path d="M1 3.800L8.500 1 6 8 4.500 5Z M4.500 5L8.500 1" fill="none" stroke="#dfe2e8" stroke-width="1" /></svg></div>
            <div class="foot"><span v-fit="262" class="f">Free Research Preview. ChatGPT may produce inaccurate information about people, places, or facts.</span><span v-fit="65" class="f un2">ChatGPT Mar 23 Version</span></div>
          </div>
        </div>
      </section>
      <h2><span v-fit="386" class="f">4. Ambulance Tracking</span></h2>
    </div>
  </main>
</template>

<style>
body { margin: 0; background: #fff; overflow: hidden; }
</style>

<style scoped>
* { box-sizing: border-box; }
p, h1, h2, h3 { margin: 0; }
.board { width: 2116px; height: 1048px; display: flex; background: #fff; border-bottom: 1px solid #b9b9b9; font-family: "Liberation Sans", Arial, sans-serif; overflow: hidden; }
.f { display: inline-block; flex: none; white-space: pre; transform-origin: 0 50%; }
.frame { background: #000; border: 9px solid #000; box-shadow: 6px 7px 13px 1px rgba(0, 0, 0, .5); overflow: hidden; position: relative; display: flex; flex-direction: column; }
h2 { font-family: Lato, sans-serif; font-weight: 900; font-size: 36.5px; line-height: 42px; color: #000; height: 42px; display: flex; }

.left { width: 764.6px; padding-top: 21px; flex: none; }
.cell { display: flex; flex-direction: column; }
.cell1 { height: 514.5px; padding-left: 25px; }
.cell1 .frame { width: 703px; height: 415.5px; }
.cell1 h2 { margin: 20.5px 0 0 262.5px; }
.cell2 { padding-left: 28.5px; }
.cell2 .frame { width: 697.5px; height: 415.5px; }
.cell2 h2 { margin: 33.5px 0 0 267px; }
.chrome { width: 100%; height: 28px; flex: none; display: block; }
.ln { fill: none; stroke: #444a50; stroke-width: .8; }
.page { flex: 1; min-height: 0; background: #efefef; display: flex; flex-direction: column; overflow: hidden; align-items: center; color: #333; font-size: 7px; }
.task { width: 100%; height: 10.8px; flex: none; display: block; }
.welcome { align-self: stretch; flex: none; height: 29px; border-bottom: 2px solid #b5b5b5; background: #333; color: #fff; display: flex; align-items: center; justify-content: center; font-size: 15.5px; padding: 1px 6px 0 0; }
.map { border: 1.5px solid #777; border-radius: 4px; overflow: hidden; position: relative; flex: none; }
.map > svg { display: block; width: 100%; height: 100%; }
.map1 { width: 273px; height: 143px; margin: 7.5px 5px 0 0; }
.halo { paint-order: stroke; stroke: #f6f4ee; stroke-width: .8px; }
.lk { fill: #2f89b8; }
.checks { display: flex; align-items: center; height: 12px; margin: 8px 9px 0 0; flex: none; }
.cb { width: 6px; height: 6px; background: #2374e8; display: flex; margin-right: 3.5px; border-radius: 1px; }
.cb.focus { width: 7.5px; height: 7.5px; outline: 1px solid #24406e; margin: 0 3px 0 8px; }
.form1 { display: flex; align-items: center; height: 17px; gap: 2.5px; margin: 10px 6px 0 0; flex: none; }
.inp { width: 76.3px; height: 10.5px; border: 1px solid #bbb; display: flex; align-items: center; padding-left: 1px; font-size: 6.6px; color: #858585; overflow: hidden; }
.green { width: 38px; height: 17px; background: #64b05d; color: #fff; display: flex; align-items: center; justify-content: center; font-size: 6.6px; }
.btn { height: 10.5px; border: 1px solid #aaa; background: #f2f2f2; display: flex; align-items: center; justify-content: center; font-size: 6.6px; color: #222; flex: none; border-radius: 1px; }
.logout { width: 26px; margin: 11px 5px 0 0; }
.del { width: 48px; margin: 9.5px 5px 0 0; }
.table { align-self: stretch; margin-top: 8px; flex: none; font-size: 7.8px; color: #333; }
.tr { display: grid; grid-template-columns: 244.5px 260px 128px 1fr; height: 16.5px; align-items: center; border-top: 1px solid #e4e4e4; background: linear-gradient(#e4e4e4, #e4e4e4) 244px 0 / 1px 100% no-repeat, linear-gradient(#e4e4e4, #e4e4e4) 504px 0 / 1px 100% no-repeat, linear-gradient(#e4e4e4, #e4e4e4) 632px 0 / 1px 100% no-repeat, #f0f0f0; }
.tr > :nth-child(n+2) { position: relative; left: 3.5px; }
.tr .f { justify-self: start; }
.th { font-weight: bold; color: #222; height: 17px; font-size: 7.5px; }

.move { align-self: flex-start; width: 52px; border-left: 0; padding-right: 3px; justify-content: flex-end; margin-top: .5px; }
.map2 { width: 359.5px; height: 236px; border-color: #555; margin: 9.5px 1.5px 0 0; }
.form2 { display: flex; margin: 9.5px 1px 0 0; flex: none; }
.form2 .inp { width: 75.5px; background: #fff; }
.form2 .btn { width: 26px; }
.dir { position: absolute; left: 211px; top: 5px; width: 142px; height: 162px; background: #fff; border: 1px solid #c9c9c9; padding-left: 2px; overflow: hidden; font-size: 6.3px; color: #4a4a4a; }
.dir h3 { font-size: 6.9px; line-height: 10px; margin-top: 9.500px; color: #222; height: 10px; }
.dir > p { line-height: 8px; height: 8px; margin: 5.500px 0 5.500px; }
.step { display: flex; align-items: center; height: 10.35px; }
.step.two { height: 17.8px; }
.step > svg { width: 6px; height: 6px; margin: 0 2px 0 1.5px; fill: #111; flex: none; }
.what { width: 101.5px; flex: none; line-height: 8.6px; }
.what > div { height: 8.6px; }
.thumb { position: absolute; right: 0; top: 2px; width: 4px; height: 38px; background: #8b8b8b; }

.share { position: absolute; left: 270px; bottom: 13.5px; width: 145px; height: 18px; background: #fff; display: flex; align-items: center; font-size: 5.3px; color: #666; box-shadow: 0 1px 1px #bbb; font-family: "Open Sans", sans-serif; }
.cell2 .share { left: 267.5px; width: 143.500px; }
.share > i { width: 1.5px; height: 4px; border: .5px solid #bbb; margin: 0 5px 0 3px; }
.share > b { width: 38px; height: 14px; border-radius: 7px; background: #2858c9; color: #fff; display: flex; align-items: center; justify-content: center; margin: 0 4px 0 5px; }
.share > u { color: #3c69cf; }

.middle { width: 583.4px; padding-top: 21px; flex: none; }
.phone { width: 543.5px; height: 927px; background: #191d1d; font-family: Lato, sans-serif; color: #dcdedd; font-size: 19px; }
.status { width: 525px; height: 30px; flex: none; font-family: Lato, sans-serif; }
.ghost { position: absolute; left: 38px; top: 47px; color: #272b2b; line-height: 23px; }
.ghost > div { display: flex; height: 23px; }
.g2 { position: relative; left: 6.500px; }
u { text-decoration-skip-ink: none; text-underline-offset: 2px; }
.phead { height: 46px; margin-top: 21px; display: flex; align-items: center; position: relative; flex: none; padding-left: 26px; }
.av { margin: 0 12px 0 28px; }
.num { font-size: 20.5px; color: #e6e8e7; }
.call { margin: 0 44px 0 184px; }
.bubble { width: 454px; margin: 18.5px 0 0 14px; padding: 11.500px 0 14.5px 24px; background: #2f3130; border-radius: 29px / 27px; flex: none; }
.phead + .bubble { margin-top: 26px; padding-bottom: 12.5px; }
.bubble + .bubble { padding-bottom: 12.5px; }
.line { display: flex; align-items: flex-end; line-height: 23px; }
.line > svg { margin-bottom: .8px; flex: none; }
.gap { flex: none; }
.un { text-decoration: underline; text-decoration-skip-ink: none; text-decoration-thickness: 1.3px; text-underline-offset: 2.5px; }
.compose { display: flex; align-items: center; height: 55px; margin-top: 14px; padding-left: 21px; flex: none; }
.gal { margin: 0 26px 0 25px; }
.field { width: 371px; height: 55px; border-radius: 38px / 27.5px; background: #2f3130; display: flex; align-items: center; padding-left: 20.5px; color: #a9adac; }
.cur { width: 1.5px; height: 28px; background: #999; margin-right: 1px; }
.smile { margin: 0 35px 0 82px; }
.home { width: 178px; height: 4px; border-radius: 2px; background: #909293; margin: 17px 0 0 174px; flex: none; }
.middle h2 { margin: 39px 0 0 140px; }

.right { padding-top: 19px; }
.chat { width: 688.5px; height: 409px; border-top-width: 20px; font-family: Inter, sans-serif; color: #e9eaee; font-size: 6.4px; }
.safari { width: 100%; height: 34px; flex: none; }
.cbody { flex: 1; display: flex; min-height: 0; }
aside { width: 92px; background: #202123; flex: none; }
.newchat { width: 87.5px; height: 18px; margin: 3px 0 0 2px; border: 1px solid #8b8c8f; border-radius: 2px; display: flex; align-items: center; justify-content: center; gap: 5px; font-size: 7px; color: #fff; }
.today { height: 20px; padding: 6px 0 0 10px; font-size: 5.6px; color: #a0a1a6; }
.hist { width: 87px; height: 46.5px; margin-bottom: 3.5px; border-radius: 2px; background: #454953; display: flex; align-items: center; }
.hist i { width: 2px; height: 2px; background: #777c86; margin: 0 4px 0 9px; }
.hist p { height: 10px; line-height: 10px; }
.conv { flex: 1; background: #343440; display: flex; flex-direction: column; }
.msg { display: flex; height: 38px; padding: 11px 0 0 155px; flex: none; line-height: 16.5px; }
.usr { width: 17.5px; height: 15.5px; border: 1px solid #5c6177; margin-right: 10.500px; display: flex; align-items: center; justify-content: center; }
.usr i { width: 7px; height: 7px; background: #5aa7ea; color: #174f86; font: bold 6px/7px "Liberation Sans", sans-serif; text-align: center; }
.bot { height: 50px; background: #4e5462; padding-top: 12px; }
.bot svg { margin-right: 11px; }
.bot p { height: 16.5px; line-height: 11.5px; }
.grow { flex: 1; }
.send { width: 283px; height: 23px; margin-left: 150px; border-radius: 3px; background: #4b5362; display: flex; align-items: center; justify-content: space-between; padding: 0 10px 0 8px; color: #a4aab5; font-size: 7px; flex: none; }
.foot { display: flex; gap: 2px; height: 13.5px; align-items: center; padding-left: 117px; font-size: 5.4px; flex: none; color: #c9cad0; }
.un2 { text-decoration: underline; }
.right h2 { margin: 16px 0 0 143px; }
</style>
